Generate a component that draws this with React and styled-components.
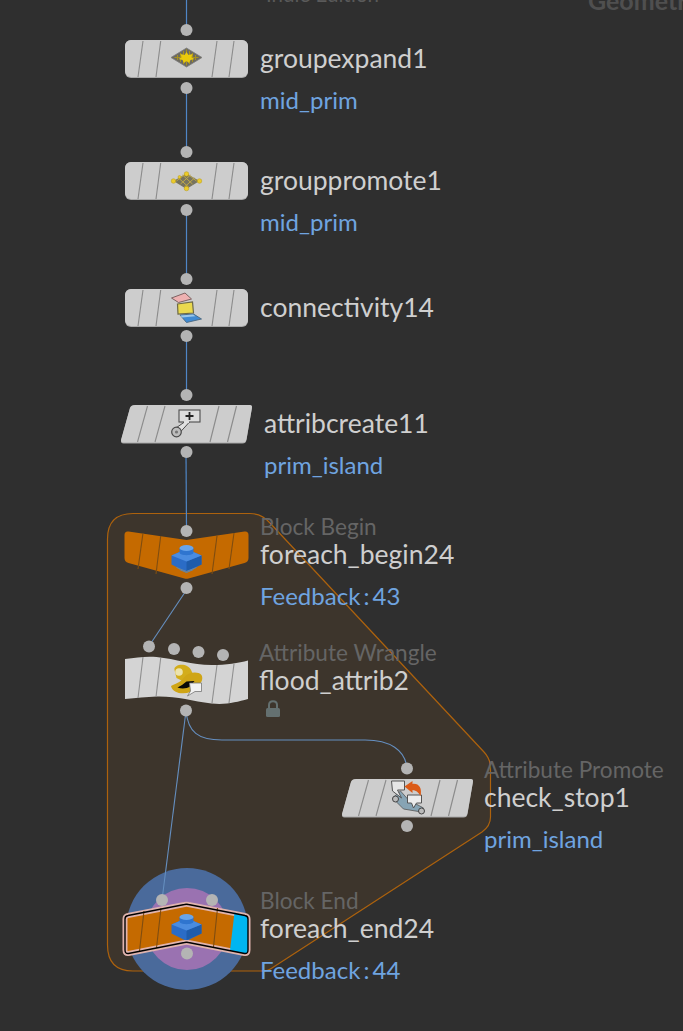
import React from 'react'
import styled, { createGlobalStyle } from 'styled-components'

const GlobalStyle = createGlobalStyle`
  html, body { margin: 0; padding: 0; background: #2f2f2f; }
`

const Canvas = styled.div`
  position: relative;
  width: 683px;
  height: 1031px;
  overflow: hidden;
  background: #2f2f2f;
  font-family: Lato, "Noto Sans", sans-serif;
`

const Graph = styled.svg`
  position: absolute;
  left: 0;
  top: 0;
`

const Watermark = styled.div`
  position: absolute;
  left: ${p => p.$x}px;
  bottom: ${p => 1031 - p.$baseline - 6}px;
  line-height: 30px;
  color: ${p => p.$color};
  font-size: ${p => p.$size}px;
  font-weight: ${p => p.$weight};
  white-space: nowrap;
`

const NodeItem = styled.div`
  position: absolute;
  left: ${p => p.$x - 70}px;
  top: ${p => p.$y - 42}px;
  display: flex;
  align-items: flex-start;
`

const ShapeSlot = styled.div`
  width: 140px;
  height: 84px;
  flex: none;
  display: flex;
  align-items: center;
`

const Labels = styled.div`
  margin: -1px 0 0 ${p => p.$offset}px;
  display: flex;
  flex-direction: column;
  white-space: nowrap;
`

const TypeName = styled.div`
  height: 28px;
  line-height: 30px;
  font-size: 22.6px;
  color: #656565;
`

const NodeName = styled.div`
  height: 28px;
  line-height: 28px;
  font-size: 26.5px;
  color: #cfcfcf;
`

const Comment = styled.div`
  margin-top: 14px;
  height: 28px;
  line-height: 28px;
  font-size: 24px;
  word-spacing: -3px;
  color: #6fa4e0;
`

const LockBadge = styled.svg`
  margin: 5px 0 0 5px;
  display: block;
`

const stripes = {
  box: [[26.5, 21.5], [44.2, 39.5], [100.5, 95.5], [117.5, 112.5]],
  slant: [[31, 21], [48.5, 38.5], [102.5, 93.5], [120, 111]],
  end: [[27.5, 23], [44.5, 40], [101, 97]],
}

const Stripes = ({ lines, top, bottom, color }) => (
  <g stroke={color} strokeWidth="1.1">
    {lines.map(([a, b], i) => {
      const t = Array.isArray(top) ? top[i] : top
      const u = Array.isArray(bottom) ? bottom[i] : bottom
      return <line key={i} x1={a} y1={t} x2={b} y2={u} />
    })}
  </g>
)

const BoxBody = () => (
  <>
    <rect x="8.5" y="11" width="123" height="38" rx="6" fill="#a9a9a9" />
    <rect x="8.5" y="11" width="123" height="37" rx="6" fill="#cdcdcd" />
    <Stripes lines={stripes.box} top={12} bottom={48} color="#8b8b8b" />
  </>
)

const SlantBody = () => (
  <>
    <path d="M19 11H133Q136 11 135.4 14L130 46Q129.4 49.5 126 49.5H7Q4 49.5 4.6 46.5L13.5 14Q14.5 11 19 11Z" fill="#a9a9a9" />
    <path d="M19 11H133Q136 11 135.4 14L130 45Q129.4 48.5 126 48.5H7Q4 48.5 4.6 45.5L13.5 14Q14.5 11 19 11Z" fill="#cdcdcd" />
    <Stripes lines={stripes.slant} top={12} bottom={48} color="#8b8b8b" />
  </>
)

const WaveBody = () => (
  <>
    <path d="M8.5 8C20 6.5 30 5 40 6C60 8 75 14 95 14C110 14 122 12 131.5 9.5V48C120 51 110 54 95 52.5C75 50 60 45 40 45.5C30 45.8 20 47 8.5 48Z" fill="#d4d4d4" />
    <Stripes lines={stripes.box} top={[6, 7, 14, 13]} bottom={[47, 46, 52, 52]} color="#8f8f8f" />
  </>
)

const BeginBody = () => (
  <>
    <path d="M12 6.5L70 15L128 6.5Q132 6 132 10V33Q132 37 128 38L72 53.5Q70 54 68 53.5L12 38Q8 37 8 33V10Q8 6 12 6.5Z" fill="#c56a00" />
    <Stripes lines={stripes.box} top={[8, 11, 11, 8]} bottom={[44, 49, 49, 44]} color="#7f4d10" />
  </>
)

const endOutline = 'M11.5 16.5L68 5.5Q70 5 72 5.5L128.5 16.5Q131.5 17 131.5 20V51Q131.5 55 128 54.5L72 43.5Q70 43 68 43.5L12 54.5Q8.5 55 8.5 51V20Q8.5 17 11.5 16.5Z'

const EndBody = () => (
  <>
    <path d={endOutline} fill="#c56a00" stroke="#e0b4ae" strokeWidth="5" />
    <path d="M118 13.5L128.5 16.5Q131.5 17 131.5 20V51Q131.5 55 128 54.5L113.5 51.5Z" fill="#00b5f1" />
    <Stripes lines={stripes.end} top={[12, 9, 9]} bottom={[52, 49, 48]} color="#7f4d10" />
    <path d={endOutline} fill="none" stroke="#000" strokeWidth="1.4" />
  </>
)

const GroupExpandIcon = () => (
  <>
    <path d="M70 19L85.5 28.5L70 38L54.5 28.5Z" fill="#6d6a60" stroke="#7d7d7d" strokeWidth=".8" />
    <path d="M70 20.5V36.5M67 22V35M73 22V35M64 24V33M76 24V33M61 26V31M79 26V31M58 28.5H82" stroke="#a8921f" strokeWidth="1" />
    <path d="M70 23L72 26L76 25L75 28.5L78 30L74 31L72.5 34L70 32L67.5 34L66 31L62 30L65 28.5L64 25L68 26Z" fill="#eaca0c" />
  </>
)

const GroupPromoteIcon = () => (
  <>
    <path d="M70 22.5L83 30L70 38L57 30Z" fill="#77735f" />
    <path d="M60 30L70 22M64 33L74 24M68 36L78 27M80 30L70 22M76 33L66 24M72 36L62 27" stroke="#bda84a" strokeWidth="1" />
    {[[70, 23], [57, 30], [83, 30], [70, 37.5], [63, 26]].map(([cx, cy]) => (
      <circle key={cx + cy} cx={cx} cy={cy} r={cx === 63 ? 1.5 : 2.3} fill="#eccb2a" stroke="#b79a16" strokeWidth=".5" />
    ))}
  </>
)

const ConnectivityIcon = () => (
  <>
    <path d="M55 20L68.5 15L75 21L62 24.5Z" fill="#eeb1b1" stroke="#7d6262" strokeWidth="1" />
    <path d="M61 26L76 24L77 35L61.5 36Z" fill="#ead94e" stroke="#6e6a45" strokeWidth="1.2" />
    <path d="M63.5 37L77 36L85 41L70 44.5Z" fill="#3f8ad2" stroke="#48677f" strokeWidth=".9" />
    <path d="M64 37.5L76.5 36.5L79 38.2L65.5 39.5Z" fill="#9cc7e8" />
  </>
)

const AttribCreateIcon = () => (
  <>
    <path d="M68 28L58 35L62 40L73 28Z" fill="#e2e2e2" stroke="#4d4d4d" strokeWidth="1" />
    <rect x="62.5" y="16" width="21" height="12" fill="#dcdcdc" stroke="#4d4d4d" strokeWidth="1.1" />
    <rect x="67.5" y="27" width="5" height="2" fill="#e2e2e2" />
    <path d="M73 18V26M69 22H77" stroke="#222" strokeWidth="1.8" />
    <circle cx="60" cy="38" r="4.8" fill="#bdbdbd" stroke="#4a4a4a" strokeWidth="1.2" />
    <circle cx="60" cy="38" r="1.6" fill="#777" />
  </>
)

const BlockIcon = ({ dy = 0, ridged }) => (
  <g transform={`translate(0 ${dy})`}>
    <path d="M55 24.5L70 18L85 24.5V33.5L72 40H68L55 33.5Z" fill="#2b6cc6" />
    <path d="M70 30.5V40L85 33.5V24.5Z" fill="#1f5cab" />
    <path d="M55 24.5L70 18L85 24.5L70 30.5Z" fill="#4a8ce0" />
    <path d="M63 17V21.5C63 25 77 25 77 21.5V17Z" fill="#2f75cf" />
    <ellipse cx="70" cy="17" rx="7" ry="3" fill="#69a5ea" />
    {ridged && <path d="M60 36.5L70 40.5L80 36.5M63 38.5L70 41.5L77 38.5" fill="none" stroke="#5f86ad" strokeWidth="1" />}
  </g>
)

const WrangleIcon = () => (
  <>
    <path d="M58 19C57 15 63 13 68 14C72 15 75 18 76 23L66 30L60 27Z" fill="#d3ad1b" />
    <circle cx="62.5" cy="21" r="3.8" fill="#ece3ae" />
    <path d="M54.5 35C60 32 63 32 67 27C72 21 81 20 85 24C87 28 85 32 81 35L74 41C66 44 56 42 54.5 35Z" fill="#cfa516" />
    <path d="M61 36.5C64 35 67 33 70 30.5L78 30L74 35C70 38 65 38 61 36.5Z" fill="#080808" />
    <path d="M73 32H85V40.5H78.5L71 45L74 40Z" fill="#f2f2f2" stroke="#777" strokeWidth=".8" />
  </>
)

const PromoteIcon = () => (
  <>
    <path d="M55 30L63 23L71 32L86 40L84 44L66 41Z" fill="#87a4b4" stroke="#555" strokeWidth=".8" />
    <circle cx="58" cy="31" r="3" fill="#bbb" stroke="#444" />
    <circle cx="84" cy="43" r="3" fill="#bbb" stroke="#444" />
    <path d="M54 13H67V22H60L64 30L55 23Z" fill="#e6e6e6" stroke="#555" strokeWidth="1" />
    <path d="M70 27H84V35H79L76 40L74 35H70Z" fill="#ececec" stroke="#555" strokeWidth="1" />
    <path d="M67 18.5L75 13V16C81 15 85 20 83 28C81 24 78 22 75 22V25Z" fill="#db5a17" />
  </>
)

const Shape = ({ children }) => (
  <svg width="140" height="60" viewBox="-0.5 0 140 60">{children}</svg>
)

const nodes = [
  { x: 186, y: 59, body: <BoxBody />, icon: <GroupExpandIcon />, name: 'groupexpand1', comment: 'mid_prim', offset: 4 },
  { x: 186, y: 181, body: <BoxBody />, icon: <GroupPromoteIcon />, name: 'grouppromote1', comment: 'mid_prim', offset: 4 },
  { x: 186, y: 308, body: <BoxBody />, icon: <ConnectivityIcon />, name: 'connectivity14', offset: 4 },
  { x: 186, y: 424, body: <SlantBody />, icon: <AttribCreateIcon />, name: 'attribcreate11', comment: 'prim_island', offset: 8 },
  { x: 186, y: 555, body: <BeginBody />, icon: <BlockIcon dy={6} ridged />, type: 'Block Begin', name: 'foreach_begin24', comment: 'Feedback : 43', offset: 4 },
  { x: 186, y: 681, body: <WaveBody />, icon: <WrangleIcon />, type: 'Attribute Wrangle', name: 'flood_attrib2', offset: 3, locked: true },
  { x: 407, y: 798, body: <SlantBody />, icon: <PromoteIcon />, type: 'Attribute Promote', name: 'check_stop1', comment: 'prim_island', offset: 7 },
  { x: 186, y: 929, body: <EndBody />, icon: <BlockIcon dy={1} />, type: 'Block End', name: 'foreach_end24', comment: 'Feedback : 44', offset: 4 },
]

const ports = [
  [186.5, 30], [186.5, 88], [186.5, 152], [186.5, 210], [186.5, 279], [186.5, 336],
  [186.5, 395], [186.5, 452], [186.5, 531], [186.5, 588],
  [149, 646.5], [174, 649], [198.5, 652], [223, 655], [186, 710.5],
  [407, 768.5], [407, 826], [162, 900], [212, 900], [187, 953.5],
]

const blueWires = [
  'M186.5 0V30', 'M186.5 88V152', 'M186.5 210V279', 'M186.5 336V395', 'M186 452L186.5 531',
]

const paleWires = [
  'M186.5 590L149 646', 'M186 711L162 900',
  'M186 711C188 732 198 740 222 740H365C390 740 405 750 407 768',
]

const NodeGraph = () => (
  <Graph width="683" height="1031" viewBox="0 0 683 1031">
    <path
      d="M133 513.5H250Q262 513.5 270 523L484 752Q490.5 759 490.5 768V817Q490.5 826 482 832L272 968Q268 971 262 971H133Q107.5 971 107.5 945V539Q107.5 513.5 133 513.5Z"
      fill="#3d352c"
      stroke="#ad620d"
      strokeWidth="1.2"
    />
    <circle cx="187" cy="929" r="61" fill="#4a6a9b" />
    <circle cx="187" cy="929" r="41" fill="#9a72b1" />
    {blueWires.map(d => <path key={d} d={d} fill="none" stroke="#4f86c6" strokeWidth="1.2" />)}
    {paleWires.map(d => <path key={d} d={d} fill="none" stroke="#658fc0" strokeWidth="1.1" />)}
    {ports.map(([cx, cy]) => <circle key={`${cx}-${cy}`} cx={cx} cy={cy} r="6" fill="#b4b4b4" />)}
  </Graph>
)

const App = () => (
  <Canvas>
    <GlobalStyle />
    <NodeGraph />
    <Watermark $x={266} $baseline={3} $color="#5a5a5a" $size={20.5} $weight={400}>Indie Edition</Watermark>
    <Watermark $x={588} $baseline={9} $color="#4f4f4f" $size={25} $weight={700}>Geometry</Watermark>
    {nodes.map(n => (
      <NodeItem key={n.name} $x={n.x} $y={n.y}>
        <ShapeSlot>
          <Shape>
            {n.body}
            {n.icon}
          </Shape>
        </ShapeSlot>
        <Labels $offset={n.offset}>
          <TypeName>{n.type}</TypeName>
          <NodeName>{n.name}</NodeName>
          {n.comment && <Comment>{n.comment}</Comment>}
          {n.locked && (
            <LockBadge width="18" height="20" viewBox="0 0 18 20">
              <path d="M5 9V6C5 1 13 1 13 6V9" fill="none" stroke="#647070" strokeWidth="2" />
              <rect x="2" y="9" width="14" height="9" rx="1.5" fill="#647070" />
            </LockBadge>
          )}
        </Labels>
      </NodeItem>
    ))}
  </Canvas>
)

export default App
